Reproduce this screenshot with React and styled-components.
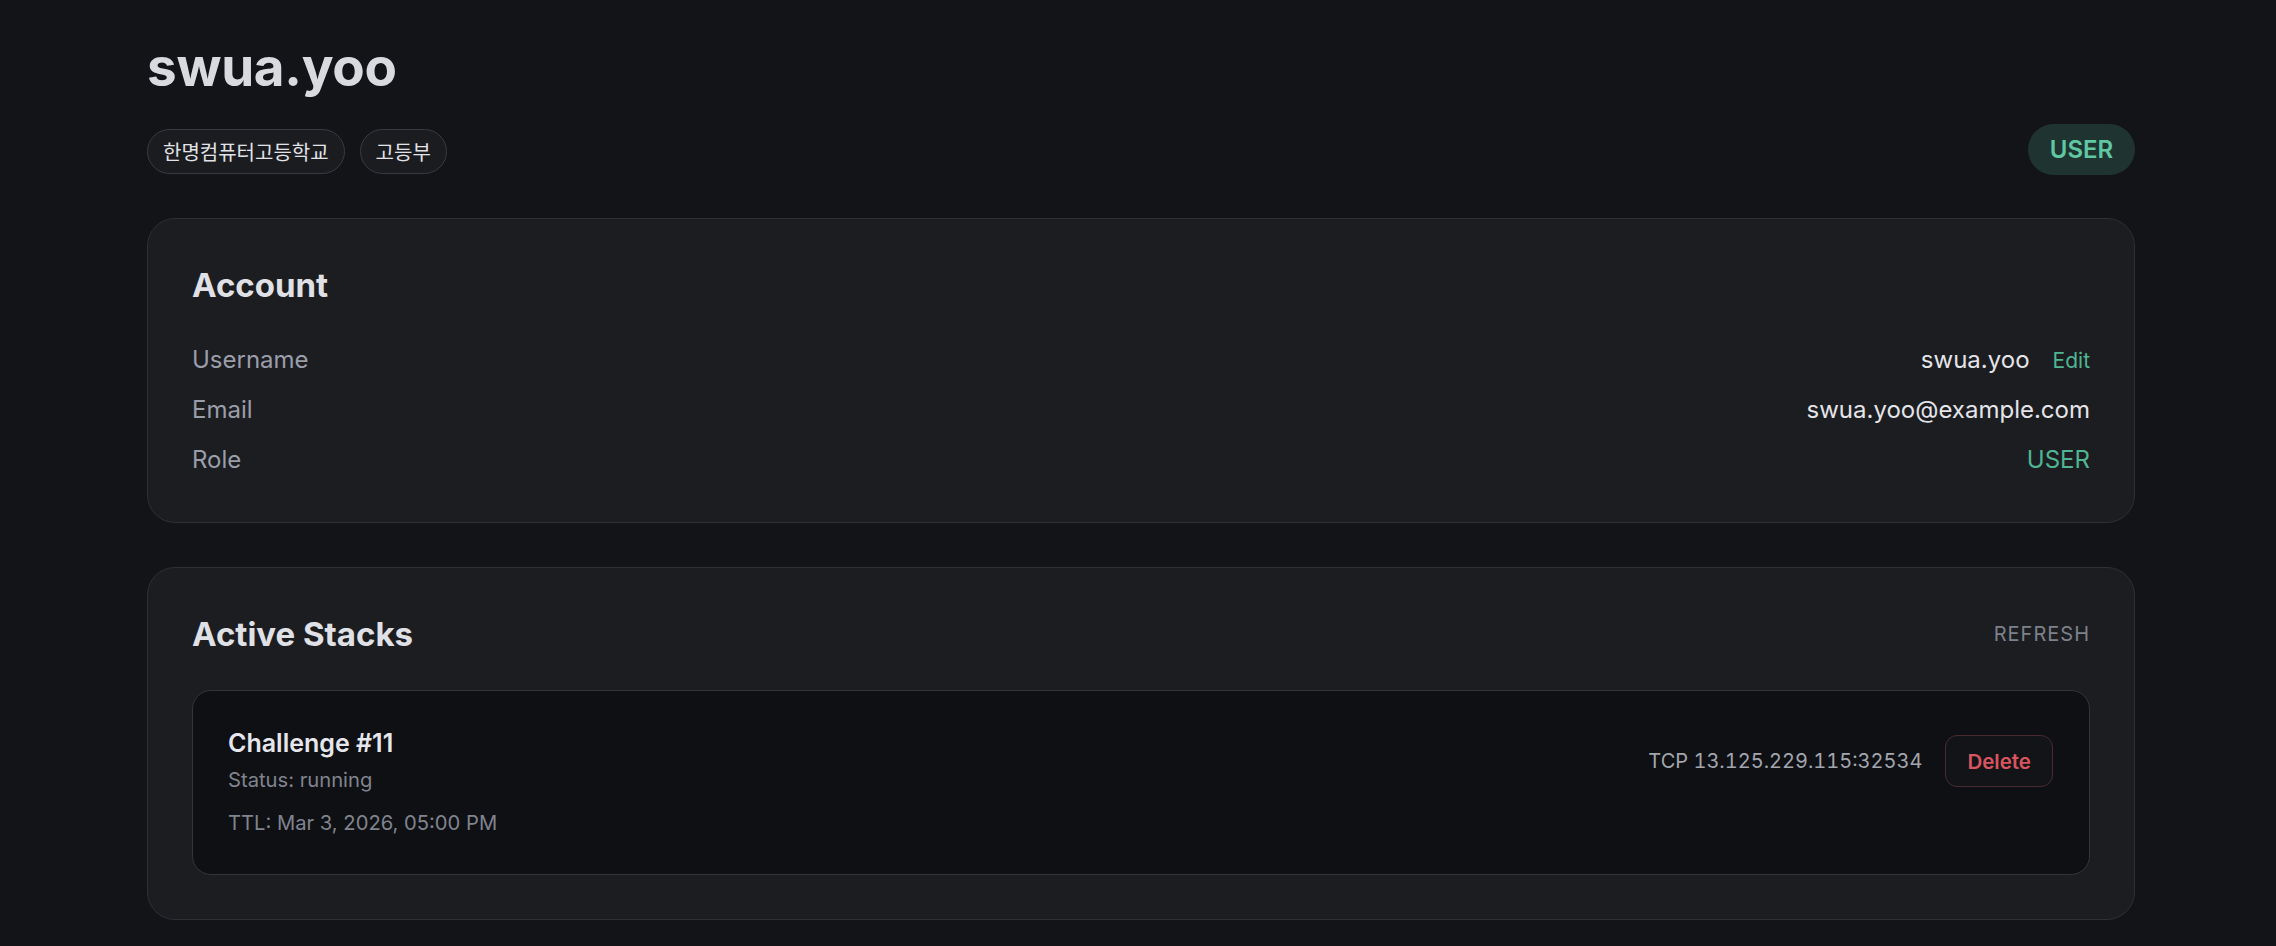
import React from "react"
import styled, { createGlobalStyle } from "styled-components"

const GlobalStyle = createGlobalStyle`
  html, body {
    margin: 0;
    padding: 0;
    background: #131418;
  }
  body {
    font-family: "Inter", "Noto Sans", "Noto Sans CJK KR", sans-serif;
    color: #dcdde2;
  }
`

const Page = styled.div`
  width: 1988px;
  margin: 0 0 0 147px;
  padding: 36px 0 40px;
  display: flex;
  flex-direction: column;
  gap: 44px;
`

const Header = styled.header`
  display: flex;
  justify-content: space-between;
  align-items: flex-end;
`

const HeaderLeft = styled.div`
  display: flex;
  flex-direction: column;
  gap: 31px;
`

const Title = styled.h1`
  margin: 0;
  font-size: 53px;
  line-height: 62px;
  font-weight: 700;
  letter-spacing: -0.3px;
  color: #d9dae0;
`

const Chips = styled.div`
  display: flex;
  gap: 15px;
`

const Chip = styled.span`
  display: inline-flex;
  align-items: center;
  height: 45px;
  box-sizing: border-box;
  padding: 0 15px;
  border-radius: 999px;
  border: 1px solid #3a3b42;
  background: #1b1c20;
  font-family: "Noto Sans CJK KR", "Noto Sans", sans-serif;
  font-size: 20px;
  color: #e2e3e8;
`

const RoleBadge = styled.span`
  display: inline-flex;
  align-items: center;
  justify-content: center;
  height: 51px;
  width: 107px;
  margin-bottom: -1px;
  border-radius: 999px;
  background: #1f3430;
  color: #5fc7a2;
  font-size: 24px;
  font-weight: 600;
`

const Card = styled.section`
  box-sizing: border-box;
  padding: 44px 44px;
  border: 1px solid #2f3036;
  border-radius: 28px;
  background: #1c1d21;
  display: flex;
  flex-direction: column;
`

const CardHead = styled.div`
  display: flex;
  justify-content: space-between;
  align-items: center;
  margin-bottom: ${(p) => p.$gap}px;
`

const CardTitle = styled.h2`
  margin: 0;
  font-size: 33px;
  line-height: 44px;
  font-weight: 700;
  color: #e0e1e6;
`

const Rows = styled.div`
  display: flex;
  flex-direction: column;
  gap: 14px;
`

const Row = styled.div`
  display: flex;
  justify-content: space-between;
  align-items: center;
  font-size: 24px;
  line-height: 36px;
`

const Label = styled.span`
  color: #9a9eaa;
`

const Value = styled.span`
  display: flex;
  align-items: center;
  gap: 23px;
  color: ${(p) => (p.$accent ? "#4fb592" : "#e4e5ea")};
`

const TextButton = styled.button`
  border: 0;
  background: none;
  padding: 0;
  font-family: inherit;
  font-size: ${(p) => p.$size}px;
  color: ${(p) => p.$color};
  letter-spacing: ${(p) => p.$spacing || 0}px;
  cursor: pointer;
`

const StackCard = styled.div`
  box-sizing: border-box;
  padding: 34px 36px 36px 35px;
  border: 1px solid #34353b;
  border-radius: 19px;
  background: #0f1014;
  display: flex;
  justify-content: space-between;
  align-items: flex-start;
`

const StackInfo = styled.div`
  display: flex;
  flex-direction: column;
`

const StackName = styled.div`
  font-size: 25px;
  line-height: 36px;
  font-weight: 600;
  color: #e6e7ec;
  margin-bottom: 4px;
`

const StackMeta = styled.div`
  font-size: 20.2px;
  line-height: 30px;
  color: #80848e;
  & + & {
    margin-top: 13px;
  }
`

const StackActions = styled.div`
  display: flex;
  align-items: center;
  gap: 23px;
  margin-top: 10px;
`

const Endpoint = styled.span`
  font-size: 20px;
  font-variant-numeric: tabular-nums;
  color: #a3a6ae;
`

const DeleteButton = styled.button`
  height: 52px;
  padding: 0 21px;
  border: 1px solid #4a2a2f;
  border-radius: 12px;
  background: #131418;
  color: #d9555f;
  font-family: inherit;
  font-size: 20.5px;
  font-weight: 600;
  cursor: pointer;
`

export default function App() {
  return (
    <>
      <GlobalStyle />
      <Page>
        <Header>
          <HeaderLeft>
            <Title>swua.yoo</Title>
            <Chips>
              <Chip>한명컴퓨터고등학교</Chip>
              <Chip>고등부</Chip>
            </Chips>
          </HeaderLeft>
          <RoleBadge>USER</RoleBadge>
        </Header>

        <Card>
          <CardHead $gap={35}>
            <CardTitle>Account</CardTitle>
          </CardHead>
          <Rows>
            <Row>
              <Label>Username</Label>
              <Value>
                swua.yoo
                <TextButton $size={21} $color="#4fb592">
                  Edit
                </TextButton>
              </Value>
            </Row>
            <Row>
              <Label>Email</Label>
              <Value>swua.yoo@example.com</Value>
            </Row>
            <Row>
              <Label>Role</Label>
              <Value $accent>USER</Value>
            </Row>
          </Rows>
        </Card>

        <Card>
          <CardHead $gap={34}>
            <CardTitle>Active Stacks</CardTitle>
            <TextButton $size={20} $color="#7d818b" $spacing={1}>
              REFRESH
            </TextButton>
          </CardHead>
          <StackCard>
            <StackInfo>
              <StackName>Challenge #11</StackName>
              <StackMeta>Status: running</StackMeta>
              <StackMeta>TTL: Mar 3, 2026, 05:00 PM</StackMeta>
            </StackInfo>
            <StackActions>
              <Endpoint>TCP 13.125.229.115:32534</Endpoint>
              <DeleteButton>Delete</DeleteButton>
            </StackActions>
          </StackCard>
        </Card>
      </Page>
    </>
  )
}
